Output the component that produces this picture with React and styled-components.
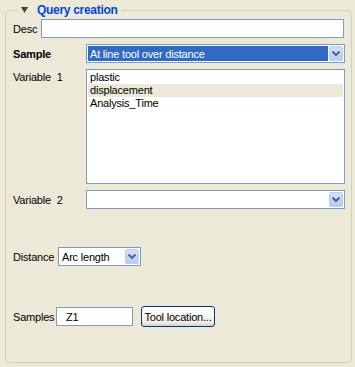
import React from "react";
import styled, { createGlobalStyle } from "styled-components";

const GlobalStyle = createGlobalStyle`
  html, body {
    margin: 0;
    padding: 0;
    background: #ece9d8;
  }
  body {
    font-family: "Liberation Sans", Arial, sans-serif;
    font-size: 11px;
    letter-spacing: -0.2px;
    color: #000;
  }
`;

const Page = styled.div`
  width: 355px;
  height: 367px;
  box-sizing: border-box;
  padding: 2px 3px 0 5px;
  background: #ece9d8;
`;

const Group = styled.fieldset`
  margin: 0;
  width: 347px;
  height: 361px;
  box-sizing: border-box;
  border: 1px solid #d0d0bf;
  border-radius: 5px;
  padding: 1px 6px 0 7px;
  display: flex;
  flex-direction: column;
`;

const Legend = styled.legend`
  margin-left: 4px;
  padding: 0 3px 0 4px;
  height: 16px;
  display: flex;
  align-items: center;
  gap: 9px;
  color: #0046d5;
  font-weight: bold;
  font-size: 12px;
  letter-spacing: -0.3px;
  line-height: 16px;
`;

const Row = styled.div`
  display: flex;
  align-items: ${({ $top }) => ($top ? "flex-start" : "center")};
  margin-top: ${({ $space }) => $space || 0}px;
`;

const Label = styled.span`
  width: ${({ $width }) => $width}px;
  flex-shrink: 0;
  font-weight: ${({ $bold }) => ($bold ? "bold" : "normal")};
  padding-top: ${({ $top }) => $top || 0}px;
  white-space: nowrap;
`;

const TextBox = styled.div`
  box-sizing: border-box;
  width: ${({ $width }) => $width}px;
  height: 19px;
  border: 1px solid #7f9db9;
  background: #fff;
  padding: 0 9px;
  display: flex;
  align-items: center;
`;

const Combo = styled.div`
  box-sizing: border-box;
  width: ${({ $width }) => $width}px;
  height: 19px;
  border: 1px solid #7f9db9;
  background: #fff;
  padding: 1px;
  display: flex;
`;

const ComboValue = styled.div`
  flex: 1;
  display: flex;
  align-items: center;
  padding-left: 2px;
  background: ${({ $selected }) => ($selected ? "#316ac5" : "#fff")};
  color: ${({ $selected }) => ($selected ? "#fff" : "#000")};
  white-space: nowrap;
  overflow: hidden;
`;

const DropButton = styled.div`
  box-sizing: border-box;
  width: 14px;
  margin-left: 1px;
  border: 1px solid #bccbf2;
  border-radius: 2px;
  background: linear-gradient(#d4e0fb, #b7cbf7);
  display: flex;
  align-items: center;
  justify-content: center;
`;

const ListBox = styled.div`
  box-sizing: border-box;
  width: 259px;
  height: 115px;
  border: 1px solid #7f9db9;
  background: #fff;
  padding: 1px;
`;

const ListItem = styled.div`
  height: 13px;
  line-height: 13px;
  padding-left: 2px;
  background: ${({ $active }) => ($active ? "#ece9d8" : "transparent")};
`;

const Button = styled.div`
  box-sizing: border-box;
  width: 74px;
  height: 21px;
  margin-left: 8px;
  border: 1px solid #003c74;
  border-radius: 3px;
  background: linear-gradient(#ffffff, #f0f0ea 80%, #d6d0c5);
  display: flex;
  align-items: center;
  justify-content: center;
  white-space: nowrap;
`;

function Chevron() {
  return (
    <svg width="8" height="5" viewBox="0 0 8 5">
      <path d="M0.5 0.5 L4 4 L7.5 0.5" fill="none" stroke="#4d6185" strokeWidth="2" />
    </svg>
  );
}

function Triangle() {
  return (
    <svg width="7" height="6" viewBox="0 0 7 6">
      <path d="M0 0 H7 L3.5 6 Z" fill="#404040" />
    </svg>
  );
}

function Select({ width, value, selected }) {
  return (
    <Combo $width={width}>
      <ComboValue $selected={selected}>{value}</ComboValue>
      <DropButton>
        <Chevron />
      </DropButton>
    </Combo>
  );
}

export default function App() {
  return (
    <Page>
      <GlobalStyle />
      <Group>
        <Legend>
          <Triangle />
          Query creation
        </Legend>

        <Row>
          <Label $width={28}>Desc</Label>
          <TextBox $width={303} />
        </Row>

        <Row $space={6}>
          <Label $width={73} $bold>
            Sample
          </Label>
          <Select width={259} value="At line tool over distance" selected />
        </Row>

        <Row $space={6} $top>
          <Label $width={73} $top={2}>
            Variable&nbsp; 1
          </Label>
          <ListBox>
            <ListItem>plastic</ListItem>
            <ListItem $active>displacement</ListItem>
            <ListItem>Analysis_Time</ListItem>
          </ListBox>
        </Row>

        <Row $space={6}>
          <Label $width={73}>Variable&nbsp; 2</Label>
          <Select width={259} value="" />
        </Row>

        <Row $space={38}>
          <Label $width={45}>Distance</Label>
          <Select width={83} value="Arc length" />
        </Row>

        <Row $space={40}>
          <Label $width={43}>Samples</Label>
          <TextBox $width={77}>Z1</TextBox>
          <Button>Tool location...</Button>
        </Row>
      </Group>
    </Page>
  );
}
